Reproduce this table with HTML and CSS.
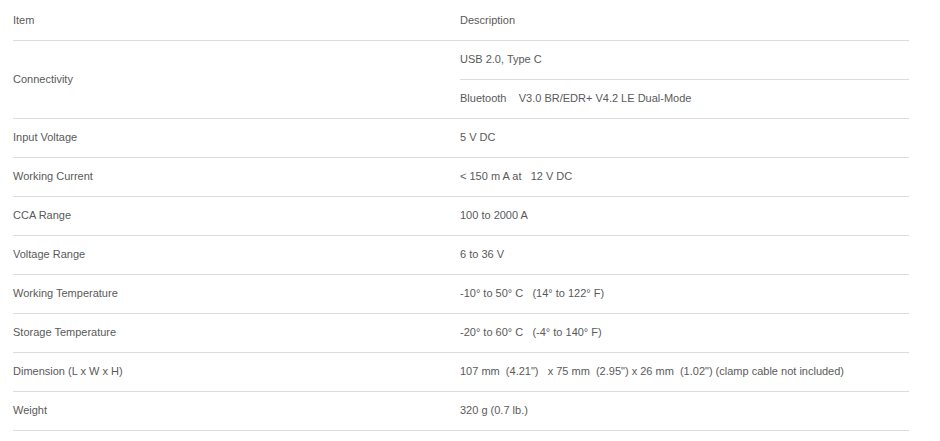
FILE: index.html
```html
<!DOCTYPE html>
<html>
<head>
<meta charset="utf-8">
<link rel="stylesheet" href="styles.css">
</head>
<body>
<table class="spec">
  <tr><td class="c1">Item</td><td class="c2">Description</td></tr>
  <tr><td class="c1" rowspan="2">Connectivity</td><td class="c2 sub">USB 2.0, Type C</td></tr>
  <tr><td class="c2">Bluetooth&nbsp;&nbsp;&nbsp; V3.0 BR/EDR+ V4.2 LE Dual-Mode</td></tr>
  <tr><td class="c1">Input Voltage</td><td class="c2">5 V DC</td></tr>
  <tr><td class="c1">Working Current</td><td class="c2">&lt; 150 m A at&nbsp;&nbsp; 12 V DC</td></tr>
  <tr><td class="c1">CCA Range</td><td class="c2">100 to 2000 A</td></tr>
  <tr><td class="c1">Voltage Range</td><td class="c2">6 to 36 V</td></tr>
  <tr><td class="c1">Working Temperature</td><td class="c2">-10° to 50° C&nbsp;&nbsp; (14° to 122° F)</td></tr>
  <tr><td class="c1">Storage Temperature</td><td class="c2">-20° to 60° C&nbsp;&nbsp; (-4° to 140° F)</td></tr>
  <tr><td class="c1">Dimension (L x W x H)</td><td class="c2">107 mm&nbsp; (4.21")&nbsp;&nbsp; x 75 mm&nbsp; (2.95") x 26 mm&nbsp; (1.02") (clamp cable not included)</td></tr>
  <tr><td class="c1">Weight</td><td class="c2">320 g (0.7 lb.)</td></tr>
</table>
</body>
</html>
```
FILE: styles.css
```css
html, body {
  margin: 0;
  background: #fff;
}
body {
  padding: 2px 0 0 13px;
  font-family: "Liberation Sans", Arial, sans-serif;
  font-size: 11px;
  color: #5a5a5a;
}
.spec {
  border-collapse: separate;
  border-spacing: 0;
  width: 896px;
  table-layout: fixed;
}
.spec td {
  height: 36px;
  padding: 0 0 2px 0;
  vertical-align: middle;
  border-bottom: 1px solid #dcdcdc;
  white-space: nowrap;
}
.spec .c1 {
  width: 447px;
}
```
